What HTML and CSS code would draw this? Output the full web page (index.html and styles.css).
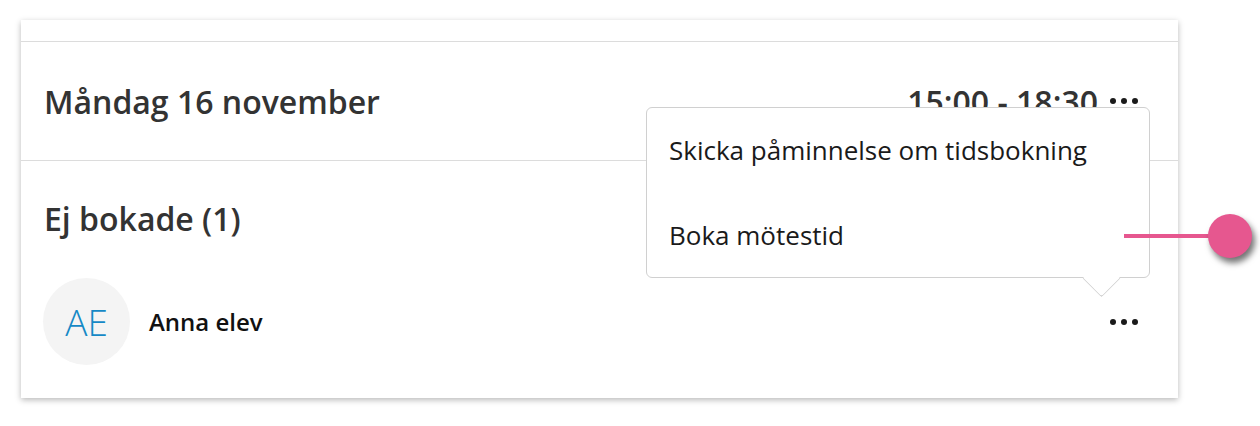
FILE: index.html
```html
<!DOCTYPE html>
<html lang="sv">
<head>
<meta charset="utf-8">
<link rel="stylesheet" href="styles.css">
</head>
<body>
<div class="card">
  <div class="card-top"></div>
  <div class="day-row">
    <h2 class="day-title">Måndag 16 november</h2>
    <div class="day-time">
      <span class="time">15:00 - 18:30</span>
      <span class="dots"><i></i><i></i><i></i></span>
    </div>
  </div>
  <div class="section">
    <h3 class="section-title">Ej bokade (1)</h3>
    <div class="person">
      <div class="avatar">AE</div>
      <div class="name">Anna elev</div>
      <span class="dots dots-person"><i></i><i></i><i></i></span>
    </div>
  </div>
  <div class="menu">
    <div class="menu-item">Skicka påminnelse om tidsbokning</div>
    <div class="menu-item">Boka mötestid</div>
    <span class="menu-arrow"></span>
  </div>
</div>
<div class="pointer"><span class="pointer-line"></span><span class="pointer-dot"></span></div>
</body>
</html>
```
FILE: styles.css
```css
html, body {
  margin: 0;
  padding: 0;
  background: #fff;
  font-family: "Open Sans", "Noto Sans", sans-serif;
  color: #333;
}
body {
  position: relative;
  width: 1260px;
  height: 426px;
  overflow: hidden;
}
.card {
  position: relative;
  margin: 20px 0 0 21px;
  width: 1157px;
  height: 378px;
  background: #fff;
  box-shadow: 0 2px 6px rgba(0,0,0,0.28);
}
.card-top {
  height: 21px;
  border-bottom: 1px solid #dcdcdc;
}
.day-row {
  display: flex;
  align-items: center;
  justify-content: space-between;
  height: 118px;
  padding: 0 40px 0 23px;
  border-bottom: 1px solid #dcdcdc;
}
.day-title {
  margin: 0;
  font-size: 32px;
  font-weight: 600;
  color: #333;
}
.day-time {
  display: flex;
  align-items: center;
  gap: 12px;
}
.time {
  font-size: 32px;
  font-weight: 600;
  color: #333;
}
.dots {
  display: flex;
  gap: 5px;
}
.dots i {
  display: block;
  width: 6px;
  height: 6px;
  border-radius: 50%;
  background: #1a1a1a;
}
.section {
  padding: 38px 40px 0 22px;
}
.section-title {
  margin: 0 0 0 1px;
  font-size: 32px;
  font-weight: 600;
  color: #333;
  line-height: 40px;
}
.person {
  display: flex;
  align-items: center;
  margin-top: 39px;
}
.avatar {
  width: 87px;
  height: 87px;
  border-radius: 50%;
  background: #f4f4f4;
  color: #1589c6;
  font-size: 37px;
  font-weight: 300;
  display: flex;
  align-items: center;
  justify-content: center;
}
.name {
  margin-left: 19px;
  font-size: 24px;
  font-weight: 600;
  color: #111;
  flex: 1;
}
.menu {
  position: absolute;
  left: 625px;
  top: 87px;
  width: 504px;
  height: 171px;
  background: #fff;
  border: 1px solid #d0d0d0;
  border-radius: 6px;
  display: flex;
  flex-direction: column;
  padding: 22px 0 0 22px;
  box-sizing: border-box;
  gap: 45px;
}
.menu-item {
  font-size: 26px;
  color: #1a1a1a;
  line-height: 40px;
}
.menu-arrow {
  position: absolute;
  left: 441px;
  bottom: -15px;
  width: 26px;
  height: 26px;
  background: #fff;
  border-right: 1px solid #d0d0d0;
  border-bottom: 1px solid #d0d0d0;
  border-bottom-right-radius: 3px;
  transform: rotate(45deg);
}
.pointer {
  position: absolute;
  left: 1124px;
  top: 214px;
  display: flex;
  align-items: center;
}
.pointer-line {
  display: block;
  width: 90px;
  height: 4px;
  background: #e6578f;
}
.pointer-dot {
  display: block;
  width: 44px;
  height: 44px;
  margin-left: -6px;
  border-radius: 50%;
  background: #e6578f;
  box-shadow: 3px 5px 6px rgba(0,0,0,0.55);
}
```
